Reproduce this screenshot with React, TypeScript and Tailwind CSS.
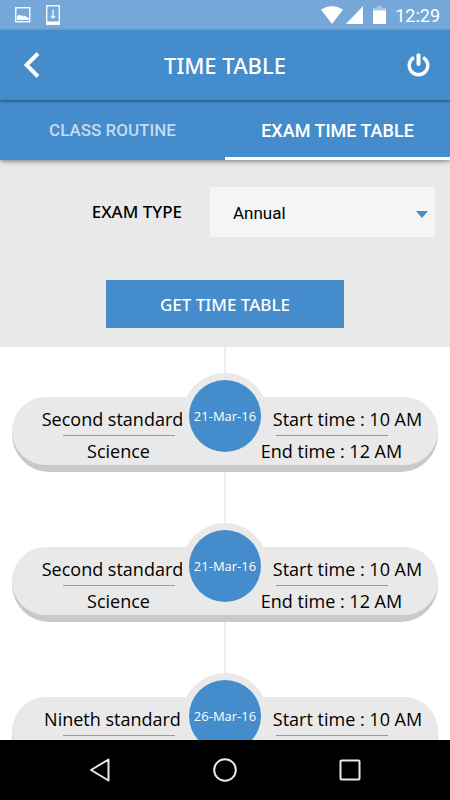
import React from "react";

type Exam = {
  standard: string;
  subject: string;
  date: string;
  start: string;
  end: string;
};

const exams: Exam[] = [
  { standard: "Second standard", subject: "Science", date: "21-Mar-16", start: "10 AM", end: "12 AM" },
  { standard: "Second standard", subject: "Science", date: "21-Mar-16", start: "10 AM", end: "12 AM" },
  { standard: "Nineth standard", subject: "Science", date: "26-Mar-16", start: "10 AM", end: "12 AM" },
];

function StatusBar() {
  return (
    <div className="flex h-[30px] shrink-0 items-center justify-between bg-[#75a8d9] pr-[10px] pl-[15px] text-white">
      <div className="flex items-center gap-[15px]">
        <svg width="16" height="16" viewBox="0 0 16 16" aria-hidden="true">
          <rect x="0.75" y="0.75" width="14" height="14" fill="none" stroke="currentColor" strokeWidth="1.3" />
          <path d="M2 13V9.5L4 7.5 5.5 9 7 8 8.5 9.5 10 8.8 11.5 10 13.5 10.5V13Z" fill="currentColor" />
        </svg>
        <svg width="14" height="20" viewBox="0 0 14 20" aria-hidden="true">
          <rect x="0.75" y="0.75" width="12.5" height="18.5" fill="none" stroke="currentColor" strokeWidth="1.3" />
          <path d="M1 16.5H13V19.5H1Z" fill="currentColor" />
          <path d="M7 4.5V12M4.8 10.8 7 13 9.2 10.8" fill="none" stroke="currentColor" strokeWidth="1.2" />
        </svg>
      </div>
      <div className="flex items-center">
        <svg width="22" height="18" viewBox="0 0 22 18" className="mr-[3px]" aria-hidden="true">
          <path d="M0 3.5Q11-3.5 22 3.5L11 18Z" fill="currentColor" />
        </svg>
        <svg width="17" height="18" viewBox="0 0 17 18" className="mr-[10px]" aria-hidden="true">
          <path d="M17 0V18H0Z" fill="currentColor" />
        </svg>
        <svg width="13" height="18" viewBox="0 0 13 18" className="mr-[9px]" aria-hidden="true">
          <path d="M4 0H9V2H13V5H0V2H4Z" fill="currentColor" opacity="0.35" />
          <path d="M0 4.5H13V18H0Z" fill="currentColor" />
        </svg>
        <span className="pt-px font-[Roboto,sans-serif] text-[18px] leading-[29px]">12:29</span>
      </div>
    </div>
  );
}

function Header() {
  return (
    <header className="relative z-20 flex h-[70px] shrink-0 items-center justify-between bg-[#448ccb] px-4 text-white shadow-[0_1px_3px_rgba(0,0,0,0.5)]">
      <button type="button" aria-label="Back" className="flex size-8 items-center justify-center">
        <svg width="16" height="26" viewBox="0 0 16 26" aria-hidden="true">
          <path d="M14 1.5 2.5 13 14 24.5" fill="none" stroke="currentColor" strokeWidth="4" />
        </svg>
      </button>
      <h1 className="text-[22px] leading-[30px] font-medium">TIME TABLE</h1>
      <button type="button" aria-label="Log out" className="flex size-8 items-center justify-center">
        <svg width="24" height="24" viewBox="0 0 24 24" fill="none" stroke="currentColor" strokeWidth="3.4" aria-hidden="true">
          <path d="M7.9 4.4A9.3 9.3 0 1 0 17.1 4.4" />
          <path d="M12.5 2.2V11" strokeWidth="4" strokeLinecap="round" />
        </svg>
      </button>
    </header>
  );
}

function Tabs() {
  return (
    <nav className="relative z-10 grid h-[60px] shrink-0 grid-cols-2 bg-[#448ccb] font-[Roboto,sans-serif] font-medium shadow-[0_1px_5px_rgba(0,0,0,0.5)]">
      <button type="button" className="border-b-3 border-transparent pt-1 text-[17px] text-[#c5dbef]">
        CLASS ROUTINE
      </button>
      <button type="button" aria-current="page" className="border-b-3 border-white pt-[3px] text-[18px] text-white">
        EXAM TIME TABLE
      </button>
    </nav>
  );
}

function ExamForm() {
  return (
    <form className="flex shrink-0 flex-col items-center gap-[43px] bg-[#e9e9e9] pt-[27px] pb-[19px]" onSubmit={(e) => e.preventDefault()}>
      <div className="flex w-full items-center pr-[15px]">
        <label htmlFor="exam-type" className="flex-1 pr-7 text-right text-[17px] font-medium">
          EXAM TYPE
        </label>
        <div className="relative w-[225px]">
          <select
            id="exam-type"
            defaultValue="Annual"
            className="h-[50px] w-full appearance-none bg-[#f5f5f5] pt-[3px] pr-8 pl-[23px] font-[Roboto,sans-serif] text-[17px] text-black"
          >
            <option>Annual</option>
          </select>
          <svg width="12" height="7" viewBox="0 0 12 7" className="pointer-events-none absolute top-6 right-[7px]" aria-hidden="true">
            <path d="M0 0H12L6 7Z" fill="#448ccb" />
          </svg>
        </div>
      </div>
      <button type="submit" className="h-12 w-[238px] bg-[#448ccb] pt-px text-[17px] font-medium text-white">
        GET TIME TABLE
      </button>
    </form>
  );
}

function ExamCard({ exam }: { exam: Exam }) {
  return (
    <li className="relative h-[150px] px-3 pt-[50px]">
      <div className="absolute top-[26px] left-1/2 size-[86px] -translate-x-1/2 rounded-full bg-[#e9e9e9]" />
      <div className="rounded-full bg-[#c9c9c9] pb-[7px]">
        <div className="grid h-[68px] grid-cols-2 rounded-full bg-[#e9e9e9] pt-[7px] text-center font-['Open_Sans','Noto_Sans',sans-serif] text-[18px] leading-[30px] whitespace-nowrap">
          <div className="flex flex-col items-center">
            <p className="pr-3">{exam.standard}</p>
            <hr className="mt-px w-[112px] border-[#999999]" />
            <p>{exam.subject}</p>
          </div>
          <div className="flex flex-col items-center">
            <p className="pl-8">Start time : {exam.start}</p>
            <hr className="mt-px w-[112px] border-[#999999]" />
            <p>End time : {exam.end}</p>
          </div>
        </div>
      </div>
      <time className="absolute top-[33px] left-1/2 flex size-[72px] -translate-x-1/2 items-center justify-center rounded-full bg-[#448ccb] pt-px font-['Open_Sans','Noto_Sans',sans-serif] text-[13px] text-white">
        {exam.date}
      </time>
    </li>
  );
}

function AndroidNav() {
  return (
    <footer className="flex h-[60px] shrink-0 items-center justify-center gap-[93px] bg-black text-[#e8e8e8]">
      <button type="button" aria-label="Back" className="flex size-8 items-center justify-center">
        <svg width="22" height="24" viewBox="0 0 22 24" aria-hidden="true">
          <path d="M19.5 1.5V22.5L2 12Z" fill="none" stroke="currentColor" strokeWidth="2" strokeLinejoin="round" />
        </svg>
      </button>
      <button type="button" aria-label="Home" className="flex size-8 items-center justify-center">
        <svg width="24" height="24" viewBox="0 0 24 24" aria-hidden="true">
          <circle cx="12" cy="12" r="10.8" fill="none" stroke="currentColor" strokeWidth="2" />
        </svg>
      </button>
      <button type="button" aria-label="Recent apps" className="flex size-8 items-center justify-center">
        <svg width="22" height="22" viewBox="0 0 22 22" aria-hidden="true">
          <rect x="1.5" y="1.5" width="19" height="19" rx="1" fill="none" stroke="currentColor" strokeWidth="2" />
        </svg>
      </button>
    </footer>
  );
}

export default function App() {
  return (
    <div className="flex h-screen flex-col bg-white font-['Noto_Sans','Open_Sans',sans-serif] text-black">
      <StatusBar />
      <Header />
      <Tabs />
      <ExamForm />
      <main className="min-h-0 flex-1 overflow-y-auto [scrollbar-width:none]">
        <ul className="relative">
          <li aria-hidden="true" className="absolute inset-y-0 left-1/2 w-0.5 -translate-x-1/2 bg-[#eeeeee]" />
          {exams.map((exam, i) => (
            <ExamCard key={i} exam={exam} />
          ))}
        </ul>
      </main>
      <AndroidNav />
    </div>
  );
}
